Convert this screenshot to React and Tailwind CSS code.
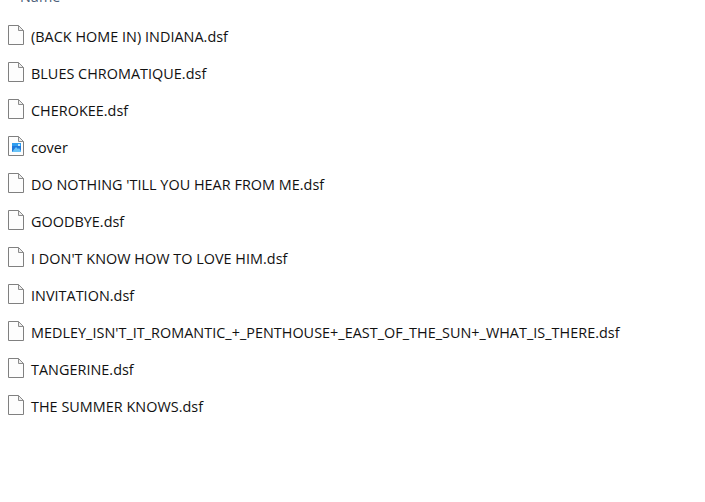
import React from 'react';

const files = [
  { name: '(BACK HOME IN) INDIANA.dsf' },
  { name: 'BLUES CHROMATIQUE.dsf' },
  { name: 'CHEROKEE.dsf' },
  { name: 'cover', image: true },
  { name: "DO NOTHING 'TILL YOU HEAR FROM ME.dsf" },
  { name: 'GOODBYE.dsf' },
  { name: "I DON'T KNOW HOW TO LOVE HIM.dsf" },
  { name: 'INVITATION.dsf' },
  { name: "MEDLEY_ISN'T_IT_ROMANTIC_+_PENTHOUSE+_EAST_OF_THE_SUN+_WHAT_IS_THERE.dsf" },
  { name: 'TANGERINE.dsf' },
  { name: 'THE SUMMER KNOWS.dsf' },
];

function FileIcon({ image }) {
  return (
    <svg width="16" height="20" viewBox="0 0 16 20" className="shrink-0 mb-[3px]">
      <path d="M0.5 0.5H10.5L15.5 5.5V19.5H0.5Z" fill="#fdfdfd" stroke="#808080" />
      <path d="M10.5 0.5V5.5H15.5Z" fill="#ececec" stroke="#8c8c8c" />
      {image && (
        <g>
          <rect x="4" y="7" width="9" height="9" fill="#1f78dc" />
          <rect x="4" y="7" width="9" height="3" fill="#2f9df0" />
          <path d="M4 16L8 11L10 13L11 12L13 15V16Z" fill="#69c3f7" />
          <rect x="10" y="8" width="2" height="2" fill="#bfe6fb" />
        </g>
      )}
    </svg>
  );
}

export default function App() {
  return (
    <div className="w-[705px] h-[502px] overflow-hidden bg-white font-['Open_Sans',sans-serif] text-[14.4px] tracking-[0.03px] text-[#111111]">
      <div className="h-[18px] pl-[20px] -mt-[12px] text-[#4c607a] leading-[18px]">Name</div>
      <div className="flex flex-col pt-[12px] pl-[8px]">
        {files.map((f) => (
          <div key={f.name} className="flex items-center gap-[7px] h-[37px]">
            <FileIcon image={f.image} />
            <span className="whitespace-nowrap">{f.name}</span>
          </div>
        ))}
      </div>
    </div>
  );
}
